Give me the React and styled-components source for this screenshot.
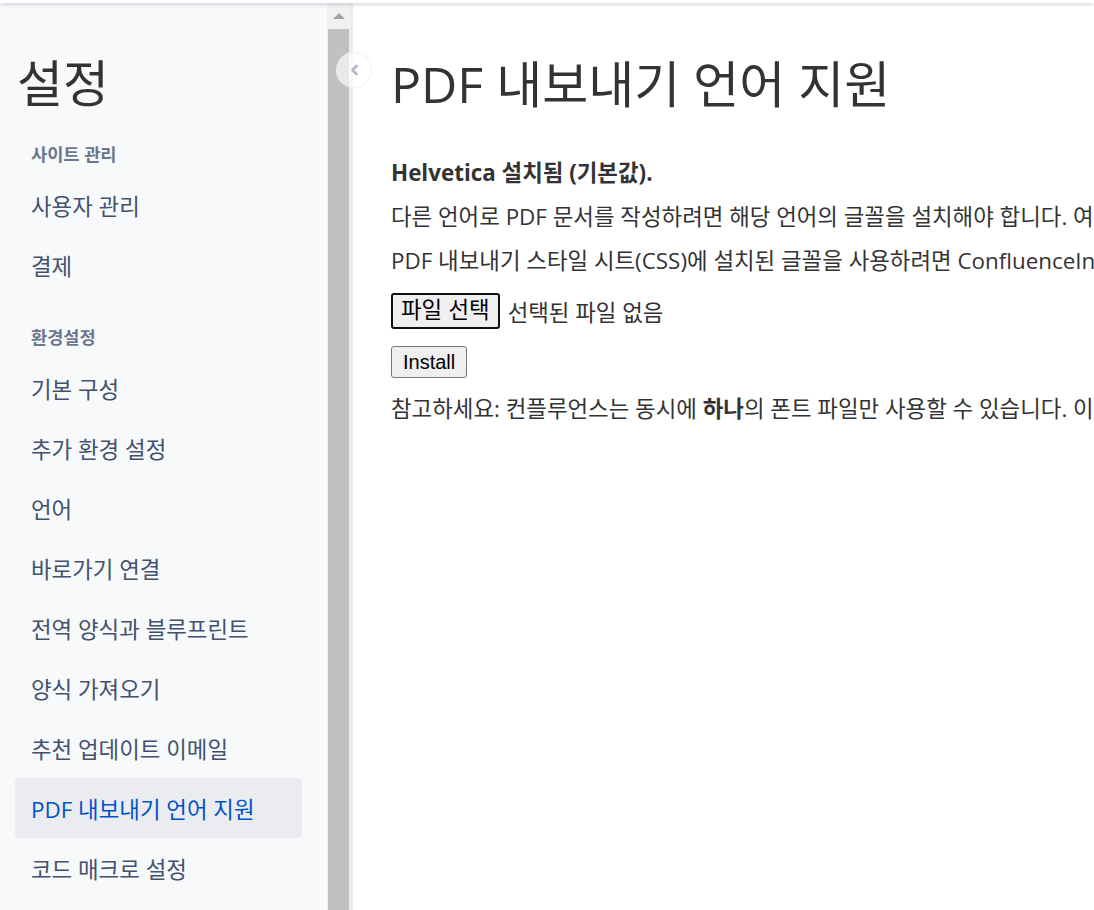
import React from "react";
import styled, { createGlobalStyle } from "styled-components";

const GlobalStyle = createGlobalStyle`
  html, body { margin: 0; padding: 0; height: 100%; overflow: hidden; }
  body {
    font-family: "Open Sans", "Noto Sans CJK KR", sans-serif;
    background: #fff;
  }
  #root { height: 100%; }
`;

const Page = styled.div`
  display: flex;
  flex-direction: column;
  height: 100vh;
`;

const TopEdge = styled.div`
  height: 3px;
  background: #fff;
  box-shadow: 0 1px 4px rgba(9, 30, 66, 0.25);
  position: relative;
  z-index: 2;
  flex: none;
`;

const Body = styled.div`
  display: flex;
  flex: 1;
  min-height: 0;
`;

const Sidebar = styled.aside`
  position: relative;
  display: flex;
  flex: none;
  background: #f8f9fb;
  border-right: 3px solid #ececec;
`;

const NavPane = styled.nav`
  width: 327px;
  box-sizing: border-box;
  padding: 52px 25px 0 15px;
  overflow: hidden;
`;

const Title = styled.h1`
  margin: 0 0 33px 2px;
  font-size: 50px;
  line-height: 56px;
  font-weight: 400;
  color: #333;
`;

const Section = styled.section`
  & + & { margin-top: 32px; }
`;

const SectionTitle = styled.h3`
  margin: 0 0 11px;
  padding: 0 16px;
  font-size: 17.6px;
  line-height: 20px;
  font-weight: 600;
  color: #6b778c;
`;

const NavItem = styled.a`
  display: flex;
  align-items: center;
  height: 60px;
  padding: 0 16px;
  border-radius: 4px;
  font-size: 22.4px;
  color: ${(p) => (p.$active ? "#0052cc" : "#42526e")};
  background: ${(p) => (p.$active ? "#ebecf0" : "transparent")};
  text-decoration: none;
  white-space: nowrap;
`;

const Rail = styled.div`
  width: 23px;
  background: #f1f1f1;
  display: flex;
  flex-direction: column;
`;

const RailArrow = styled.div`
  height: 26px;
  display: flex;
  align-items: center;
  justify-content: center;
  &::before {
    content: "";
    border-left: 6px solid transparent;
    border-right: 6px solid transparent;
    border-bottom: 6px solid #a3a3a3;
  }
`;

const Thumb = styled.div`
  flex: 1;
  margin: 0 1px;
  background: #c1c1c1;
`;

const CollapseButton = styled.button`
  position: absolute;
  top: 49px;
  right: -22px;
  width: 36px;
  height: 36px;
  border-radius: 50%;
  border: 1px solid rgba(235, 236, 240, 0.7);
  background: rgba(255, 255, 255, 0.65);
  display: flex;
  align-items: center;
  justify-content: center;
  padding: 0;
  cursor: pointer;
  z-index: 3;
`;

const Main = styled.main`
  flex: 1;
  min-width: 0;
  padding: 53px 0 0 38px;
  overflow: hidden;
  white-space: nowrap;
  color: #333;
`;

const Heading = styled.h1`
  margin: 0 0 46px;
  font-size: 50px;
  line-height: 56px;
  font-weight: 400;
  color: #333;
`;

const Para = styled.p`
  margin: 0 0 14px;
  font-size: 22.4px;
  line-height: 30px;
  font-weight: ${(p) => (p.$bold ? 700 : 400)};
`;

const FileRow = styled.div`
  display: flex;
  align-items: center;
  gap: 8px;
  margin-top: 17px;
  font-size: 22.4px;
`;

const FormButton = styled.button`
  font-family: "Liberation Sans", "Noto Sans CJK KR", sans-serif;
  font-size: ${(p) => (p.$focused ? 22.4 : 20)}px;
  color: #000;
  background: #efefef;
  border: ${(p) => (p.$focused ? "2px solid #101010" : "1px solid #767676")};
  border-radius: 3px;
  padding: ${(p) => (p.$focused ? "0 8px" : "1px 11px")};
  height: ${(p) => p.$h}px;
  box-sizing: border-box;
  line-height: 1;
`;

const InstallRow = styled.div`
  margin-top: 17px;
`;

const Note = styled(Para)`
  margin-top: 16px;
`;

const NoFile = styled.span`
  color: #333;
`;

const sections = [
  { title: "사이트 관리", items: ["사용자 관리", "결제"] },
  {
    title: "환경설정",
    items: [
      "기본 구성",
      "추가 환경 설정",
      "언어",
      "바로가기 연결",
      "전역 양식과 블루프린트",
      "양식 가져오기",
      "추천 업데이트 이메일",
      "PDF 내보내기 언어 지원",
      "코드 매크로 설정",
    ],
  },
];

export default function App() {
  return (
    <Page>
      <GlobalStyle />
      <TopEdge />
      <Body>
        <Sidebar>
          <NavPane>
            <Title>설정</Title>
            {sections.map((s) => (
              <Section key={s.title}>
                <SectionTitle>{s.title}</SectionTitle>
                {s.items.map((it) => (
                  <NavItem key={it} href="#" $active={it === "PDF 내보내기 언어 지원"}>
                    {it}
                  </NavItem>
                ))}
              </Section>
            ))}
          </NavPane>
          <Rail>
            <RailArrow />
            <Thumb />
          </Rail>
          <CollapseButton aria-label="사이드바 접기">
            <svg width="9" height="12" viewBox="0 0 9 12">
              <path d="M6.5 2 L2.5 6 L6.5 10" fill="none" stroke="#b3bac5" strokeWidth="2.6" strokeLinecap="round" strokeLinejoin="round" />
            </svg>
          </CollapseButton>
        </Sidebar>
        <Main>
          <Heading>PDF 내보내기 언어 지원</Heading>
          <Para $bold>Helvetica 설치됨 (기본값).</Para>
          <Para>
            다른 언어로 PDF 문서를 작성하려면 해당 언어의 글꼴을 설치해야 합니다. 여기에서 TrueType 글꼴 파일(.ttf)을 업로드하세요.
          </Para>
          <Para>
            PDF 내보내기 스타일 시트(CSS)에 설치된 글꼴을 사용하려면 ConfluenceInstalledFont 글꼴 패밀리를 지정하세요.
          </Para>
          <FileRow>
            <FormButton $focused $h={36}>파일 선택</FormButton>
            <NoFile>선택된 파일 없음</NoFile>
          </FileRow>
          <InstallRow>
            <FormButton $h={32}>Install</FormButton>
          </InstallRow>
          <Note>
            참고하세요: 컨플루언스는 동시에 <b>하나</b>의 폰트 파일만 사용할 수 있습니다. 이전에 설치된 폰트는 대체됩니다.
          </Note>
        </Main>
      </Body>
    </Page>
  );
}
